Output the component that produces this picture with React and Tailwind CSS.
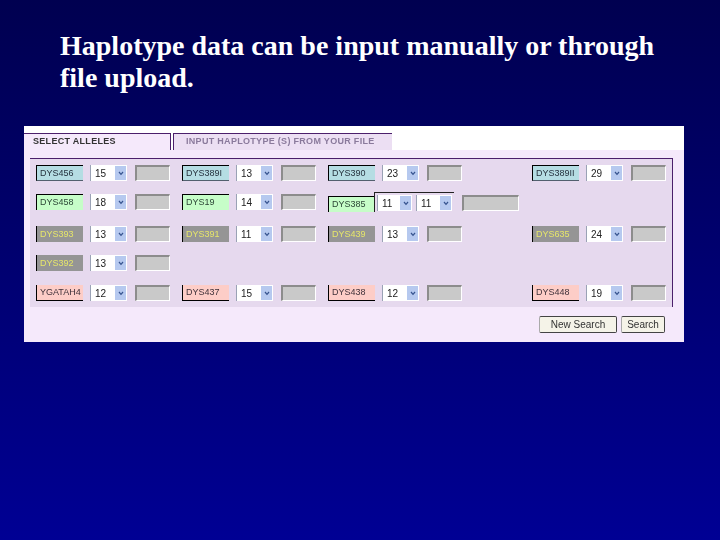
const rows = [
  { h: "mt-[6px]", cells: [
    { l: "DYS456", v: "15", t: "b" }, { l: "DYS389I", v: "13", t: "b" }, { l: "DYS390", v: "23", t: "b" }, { l: "DYS389II", v: "29", t: "b" },
  ]},
  { h: "mt-[11px]", cells: [
    { l: "DYS458", v: "18", t: "g" }, { l: "DYS19", v: "14", t: "g" }, { l: "DYS385", t: "g", dbl: true }, null,
  ]},
  { h: "mt-[14px]", cells: [
    { l: "DYS393", v: "13", t: "y" }, { l: "DYS391", v: "11", t: "y" }, { l: "DYS439", v: "13", t: "y" }, { l: "DYS635", v: "24", t: "y" },
  ]},
  { h: "mt-[13px]", cells: [{ l: "DYS392", v: "13", t: "y" }, null, null, null] },
  { h: "mt-[14px]", cells: [
    { l: "YGATAH4", v: "12", t: "p" }, { l: "DYS437", v: "15", t: "p" }, { l: "DYS438", v: "12", t: "p" }, { l: "DYS448", v: "19", t: "p" },
  ]},
];

const labelStyles = {
  b: "bg-[#b5dde3] text-[#26323e] border-l border-t border-b border-l-black border-t-black border-b-[#52606e]",
  g: "bg-[#c6fdc8] text-[#2c4636] border-l border-t border-l-black border-t-black",
  y: "bg-[#959595] text-[#e6e66a] border-l border-l-black",
  p: "bg-[#fdcdc7] text-[#40323a] border-l border-b border-l-black border-b-black",
};

function Sel({ v, w = "w-[37px]" }) {
  return (
    <div className={`${w} h-[16px] bg-white border-l border-[#9aa2b5] flex items-center justify-between pl-[4px] pr-[1px] text-[10px] text-[#222]`}>
      <span>{v}</span>
      <span className="w-[11px] h-[14px] bg-[#b6c9ef] flex items-center justify-center">
        <svg width="6" height="5" viewBox="0 0 6 5"><path d="M1 1l2 2.4L5 1" fill="none" stroke="#36538f" strokeWidth="1.2" /></svg>
      </span>
    </div>
  );
}

function Box({ w = "w-[35px]" }) {
  return <div className={`${w} h-[16px] bg-[#c9c9c9] border-t-2 border-l-2 border-t-[#8c8c8c] border-l-[#8c8c8c] border-r border-b border-r-white border-b-white`} />;
}

function Cell({ c }) {
  return (
    <div className="flex items-center">
      <div className={`w-[47px] h-[16px] pl-[3px] flex items-center text-[9px] leading-none ${labelStyles[c.t]} ${c.dbl ? "mt-[4px]" : ""}`}>{c.l}</div>
      {c.dbl ? (
        <>
          <div className="ml-[-1px] w-[80px] h-[20px] flex gap-[4px] border-l border-t border-[#222] pl-[2px] pt-[2px]">
            <Sel v="11" w="w-[35px]" />
            <Sel v="11" w="w-[36px]" />
          </div>
          <div className="ml-[8px] mt-[2px]"><Box w="w-[57px]" /></div>
        </>
      ) : (
        <div className="ml-[7px] flex items-center gap-[8px]">
          <Sel v={c.v} />
          <Box />
        </div>
      )}
    </div>
  );
}

export default function App() {
  return (
    <div className="w-[720px] h-[540px] overflow-hidden bg-gradient-to-b from-[#000050] to-[#000094] pt-[30px] font-['Liberation_Sans',sans-serif]">
      <h1 className="ml-[60px] text-[28px] leading-[32px] font-bold text-white font-['Liberation_Serif',serif] w-[610px]">
        Haplotype data can be input manually or through file upload.
      </h1>
      <div className="ml-[24px] mt-[32px] w-[660px] h-[216px] bg-white flex flex-col blur-[0.35px]">
        <div className="h-[24px] flex items-end gap-[2px] pt-[7px] text-[9px] font-bold tracking-[0.3px]">
          <div className="w-[147px] h-[17px] bg-[#f5e9fb] border-t border-r border-[#4b1f6b] pl-[9px] flex items-center text-[#333]">SELECT ALLELES</div>
          <div className="w-[219px] h-[17px] bg-[#ecdff3] border-t border-l border-[#4b1f6b] pl-[12px] flex items-center text-[#8a7a9c]">INPUT HAPLOTYPE (S) FROM YOUR FILE</div>
        </div>
        <div className="flex-1 bg-[#f5e9fb] pt-[8px] pl-[6px]">
          <div className="w-[643px] h-[149px] bg-[#e6d9ee] border-t border-r border-[#4b1f6b] pl-[6px]">
            {rows.map((r, i) => (
              <div key={i} className={`${r.h} grid grid-cols-[146px_146px_204px_140px]`}>
                {r.cells.map((c, j) => (c ? <Cell key={j} c={c} /> : <div key={j} />))}
              </div>
            ))}
          </div>
          <div className="mt-[9px] flex justify-end gap-[4px] pr-[19px] text-[10px] text-[#333]">
            <div className="w-[78px] h-[17px] flex items-center justify-center bg-[#f5f3e8] border border-[#444] rounded-[2px] border-l-[#aaa]">New Search</div>
            <div className="w-[44px] h-[17px] flex items-center justify-center bg-[#f5f3e8] border border-[#444] rounded-[2px] border-l-[#aaa]">Search</div>
          </div>
        </div>
      </div>
    </div>
  );
}
